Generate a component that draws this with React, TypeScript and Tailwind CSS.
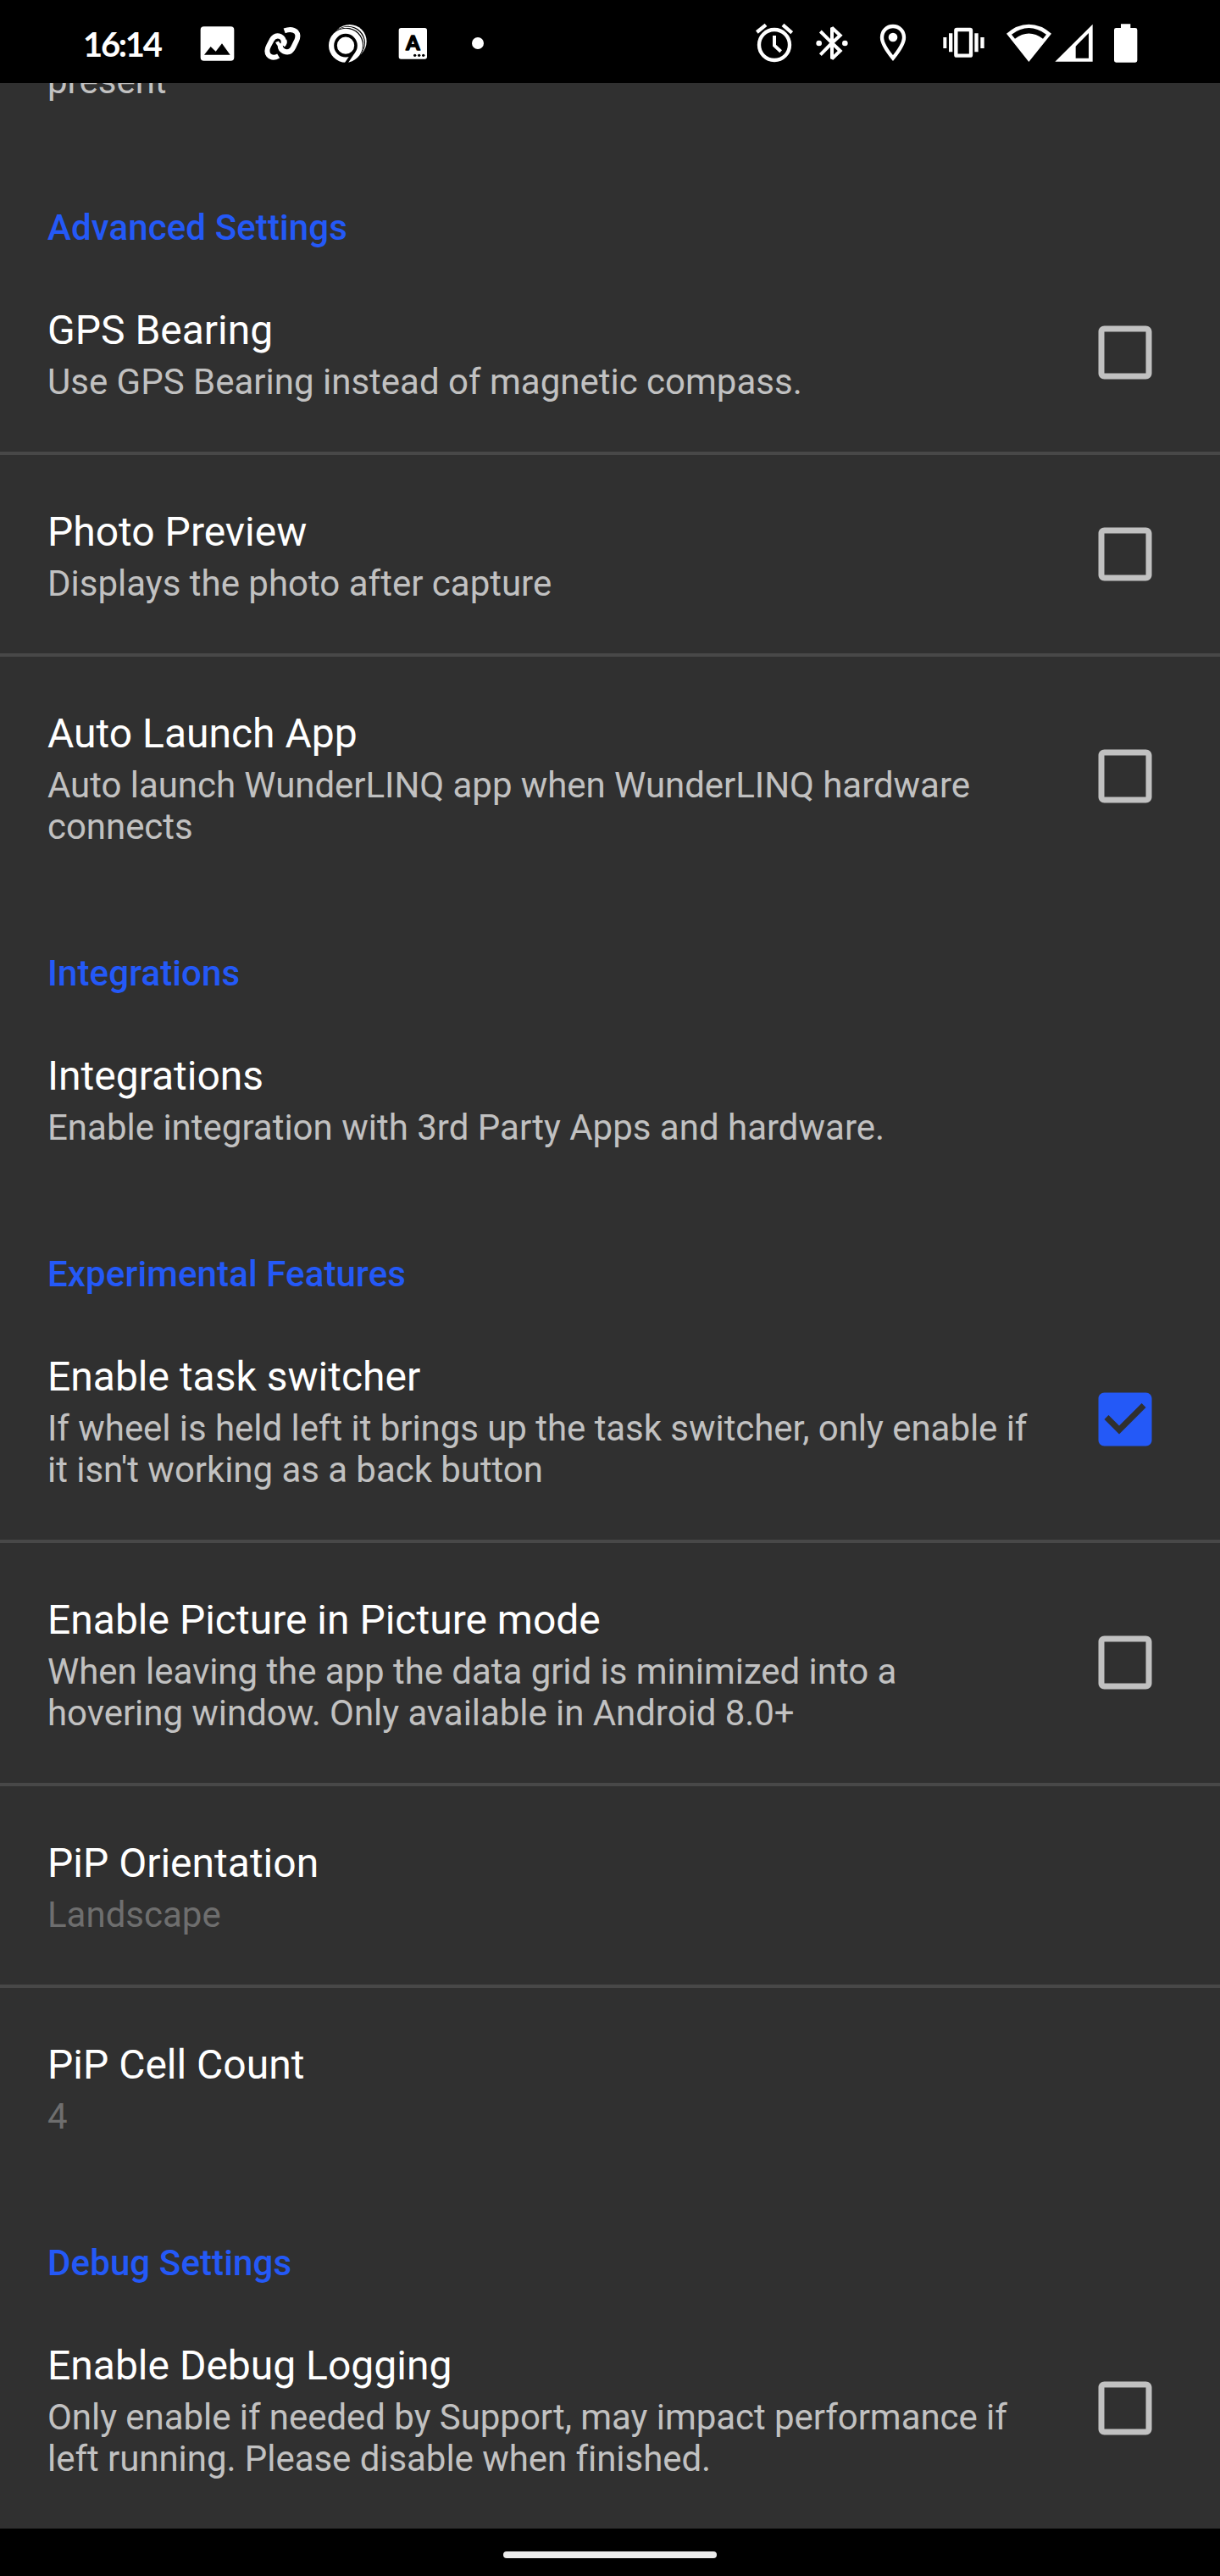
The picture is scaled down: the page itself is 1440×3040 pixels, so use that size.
import type { ReactNode } from "react";

function Glyph({ x, w, className, children }: { x: number; w: number; className: string; children: ReactNode }) {
  return (
    <svg viewBox={`${x} 0 ${w} 192`} className={`h-16 shrink-0 fill-white ${className}`}>
      {children}
    </svg>
  );
}

function StatusBar() {
  return (
    <header className="flex h-[98px] shrink-0 items-start bg-black pt-5">
      <div className="ml-[98px] w-[138px] shrink-0 font-['Lato'] text-[40px] leading-[65px] font-bold tracking-[-2.3px] text-white">
        16:14
      </div>
      <Glyph x={438} w={123} className="w-[41px]">
        <path
          fillRule="evenodd"
          d="M452 34H547Q559 34 559 46V143Q559 155 547 155H452Q440 155 440 143V46Q440 34 452 34ZM453 134H545L516 94L494 122L476 105Z"
        />
      </Glyph>
      <Glyph x={663} w={135} className="ml-[34px] w-[45px]">
        <g fill="none" stroke="#fff" strokeWidth="18" strokeLinejoin="round">
          <path d="M716 138Q695 150 681 135Q671 121 682 101L692 82Q704 61 724 70Q738 78 733 95L731 101" />
          <path d="M737 49Q764 39 779 53Q789 64 780 84L769 107Q758 130 736 122Q719 114 723 96" />
          <path d="M711 88Q716 101 729 104M733 101Q744 94 739 82" strokeWidth="12" />
        </g>
      </Glyph>
      <Glyph x={891} w={138} className="ml-[31px] w-[46px]">
        <circle cx="968" cy="87" r="60" />
        <circle cx="963" cy="92" r="60" fill="#000" />
        <circle cx="961" cy="94" r="59" />
        <circle cx="958" cy="98" r="59" fill="#000" />
        <circle cx="954" cy="101" r="62" fill="#000" />
        <circle cx="954" cy="101" r="60" />
        <circle cx="954" cy="101" r="36" fill="none" stroke="#000" strokeWidth="11" />
        <path d="M984 122L953 168" stroke="#000" strokeWidth="10" />
      </Glyph>
      <Glyph x={1140} w={105} className="ml-[37px] w-[35px]">
        <rect x="1142" y="39" width="100" height="110" rx="8" />
        <text
          x="1192"
          y="117"
          textAnchor="middle"
          fontFamily="Lato"
          fontWeight="700"
          fontSize="70"
          fill="#000"
          stroke="#000"
          strokeWidth="5"
          strokeLinejoin="round"
        >
          A
        </text>
        <g fill="#000">
          <circle cx="1199" cy="136" r="5" />
          <circle cx="1214" cy="136" r="5" />
          <circle cx="1229" cy="136" r="5" />
        </g>
      </Glyph>
      <Glyph x={1398} w={48} className="ml-[51px] w-4">
        <circle cx="1422" cy="93" r="21" />
      </Glyph>

      <div className="ml-auto flex pr-[97px]">
        <Glyph x={36} w={132} className="w-[44px]">
          <circle cx="102" cy="99" r="54" fill="none" stroke="#fff" strokeWidth="13" />
          <path d="M40 54L72 28M132 28L164 56" stroke="#fff" strokeWidth="13" />
          <path d="M102 66V101L125 122" fill="none" stroke="#fff" strokeWidth="12" />
        </Glyph>
        <Glyph x={246} w={117} className="ml-[26px] w-[39px]">
          <path
            d="M265 51L306 92L265 134M306 92L335 65L306 38V148L335 120Z"
            fill="none"
            stroke="#fff"
            strokeWidth="12"
            strokeMiterlimit="1.5"
          />
          <circle cx="260" cy="93" r="10" />
          <circle cx="352" cy="93" r="10" />
        </Glyph>
        <Glyph x={474} w={96} className="ml-[37px] w-8">
          <path
            d="M522 33C500 33 483 50 483 73C483 94 500 119 522 146C544 119 561 94 561 73C561 50 544 33 522 33Z"
            fill="none"
            stroke="#fff"
            strokeWidth="13"
          />
          <circle cx="522" cy="72" r="16" />
        </Glyph>
        <Glyph x={696} w={153} className="ml-[42px] w-[51px]">
          <rect x="745" y="45" width="53" height="92" rx="3" fill="none" stroke="#fff" strokeWidth="13" />
          <path d="M700 72H712V111H700ZM720 58H733V124H720ZM811 58H824V124H811ZM832 72H845V111H832Z" />
        </Glyph>
        <Glyph x={921} w={162} className="ml-[24px] w-[54px]">
          <path
            fillRule="evenodd"
            d="M924 59Q961 26 1003 26Q1046 26 1083 59L1003 159ZM942 62L954 77Q1003 40 1053 77L1065 62Q1003 16 942 62Z"
          />
        </Glyph>
        <Glyph x={1095} w={135} className="ml-1 w-[45px]">
          <path fillRule="evenodd" d="M1096 158L1229 26V158ZM1169 146H1215V57L1169 104Z" />
        </Glyph>
        <Glyph x={1302} w={87} className="ml-6 w-[29px]">
          <path d="M1329 25H1363V39H1380Q1387 39 1387 46V154Q1387 161 1380 161H1312Q1305 161 1305 154V46Q1305 39 1312 39H1329Z" />
        </Glyph>
      </div>
    </header>
  );
}

function Checkbox({ checked, className }: { checked: boolean; className: string }) {
  return (
    <svg
      viewBox="0 0 24 24"
      className={`size-[84px] shrink-0 ${className} ${checked ? "fill-[#2459f7]" : "fill-[#c1c1c1]"}`}
    >
      {checked ? (
        <path d="M19 3H5c-1.11 0-2 .9-2 2v14c0 1.1.89 2 2 2h14c1.11 0 2-.9 2-2V5c0-1.1-.89-2-2-2zm-9 14l-5-5 1.41-1.41L10 14.17l7.59-7.59L19 8l-9 9z" />
      ) : (
        <path d="M19 5v14H5V5h14m0-2H5c-1.1 0-2 .9-2 2v14c0 1.1.9 2 2 2h14c1.1 0 2-.9 2-2V5c0-1.1-.9-2-2-2z" />
      )}
    </svg>
  );
}

type ItemData = { title: string; lines: string[]; checked?: boolean; dim?: boolean };

function Item({ title, lines, checked, dim }: ItemData) {
  const multiline = lines.length > 1;
  return (
    <div className="flex items-center justify-between pr-[70px] pl-14">
      <div className="pt-[62px] pb-[58px]">
        <div className="text-[48px] leading-[57px] whitespace-nowrap text-white">{title}</div>
        <div
          className={`mt-2 text-[42px] leading-[49px] whitespace-nowrap ${multiline ? "tracking-[-0.05px]" : ""} ${dim ? "text-[#6e6e6e]" : "text-[#c1c1c1]"}`}
        >
          {lines.map((line) => (
            <div key={line}>{line}</div>
          ))}
        </div>
      </div>
      {checked !== undefined && <Checkbox checked={checked} className={multiline ? "-mt-px" : ""} />}
    </div>
  );
}

const sections: { title: string; items: ItemData[] }[] = [
  {
    title: "Advanced Settings",
    items: [
      { title: "GPS Bearing", lines: ["Use GPS Bearing instead of magnetic compass."], checked: false },
      { title: "Photo Preview", lines: ["Displays the photo after capture"], checked: false },
      {
        title: "Auto Launch App",
        lines: ["Auto launch WunderLINQ app when WunderLINQ hardware", "connects"],
        checked: false,
      },
    ],
  },
  {
    title: "Integrations",
    items: [{ title: "Integrations", lines: ["Enable integration with 3rd Party Apps and hardware."] }],
  },
  {
    title: "Experimental Features",
    items: [
      {
        title: "Enable task switcher",
        lines: ["If wheel is held left it brings up the task switcher, only enable if", "it isn't working as a back button"],
        checked: true,
      },
      {
        title: "Enable Picture in Picture mode",
        lines: ["When leaving the app the data grid is minimized into a", "hovering window. Only available in Android 8.0+"],
        checked: false,
      },
      { title: "PiP Orientation", lines: ["Landscape"], dim: true },
      { title: "PiP Cell Count", lines: ["4"], dim: true },
    ],
  },
  {
    title: "Debug Settings",
    items: [
      {
        title: "Enable Debug Logging",
        lines: ["Only enable if needed by Support, may impact performance if", "left running. Please disable when finished."],
        checked: false,
      },
    ],
  },
];

export default function App() {
  return (
    <div className="flex h-[3040px] w-[1440px] flex-col overflow-hidden bg-[#303030] font-['Roboto',sans-serif]">
      <StatusBar />
      <main className="h-[2886px] shrink-0 overflow-hidden">
        <div className="-mt-[27px] pb-[58px] pl-14 text-[42px] leading-[49px] text-[#c1c1c1]">present</div>
        {sections.map((section) => (
          <section key={section.title}>
            <h2 className="pt-[66px] pb-[6px] pl-14 text-[42px] leading-[49px] font-medium tracking-[0.12px] text-[#2459f7]">
              {section.title}
            </h2>
            <div className="divide-y-4 divide-[#484848]">
              {section.items.map((item) => (
                <Item key={item.title} {...item} />
              ))}
            </div>
          </section>
        ))}
      </main>
      <footer className="flex h-14 shrink-0 justify-center bg-black pt-[27px]">
        <div className="h-2 w-[252px] rounded-full bg-[#ececec]" />
      </footer>
    </div>
  );
}
